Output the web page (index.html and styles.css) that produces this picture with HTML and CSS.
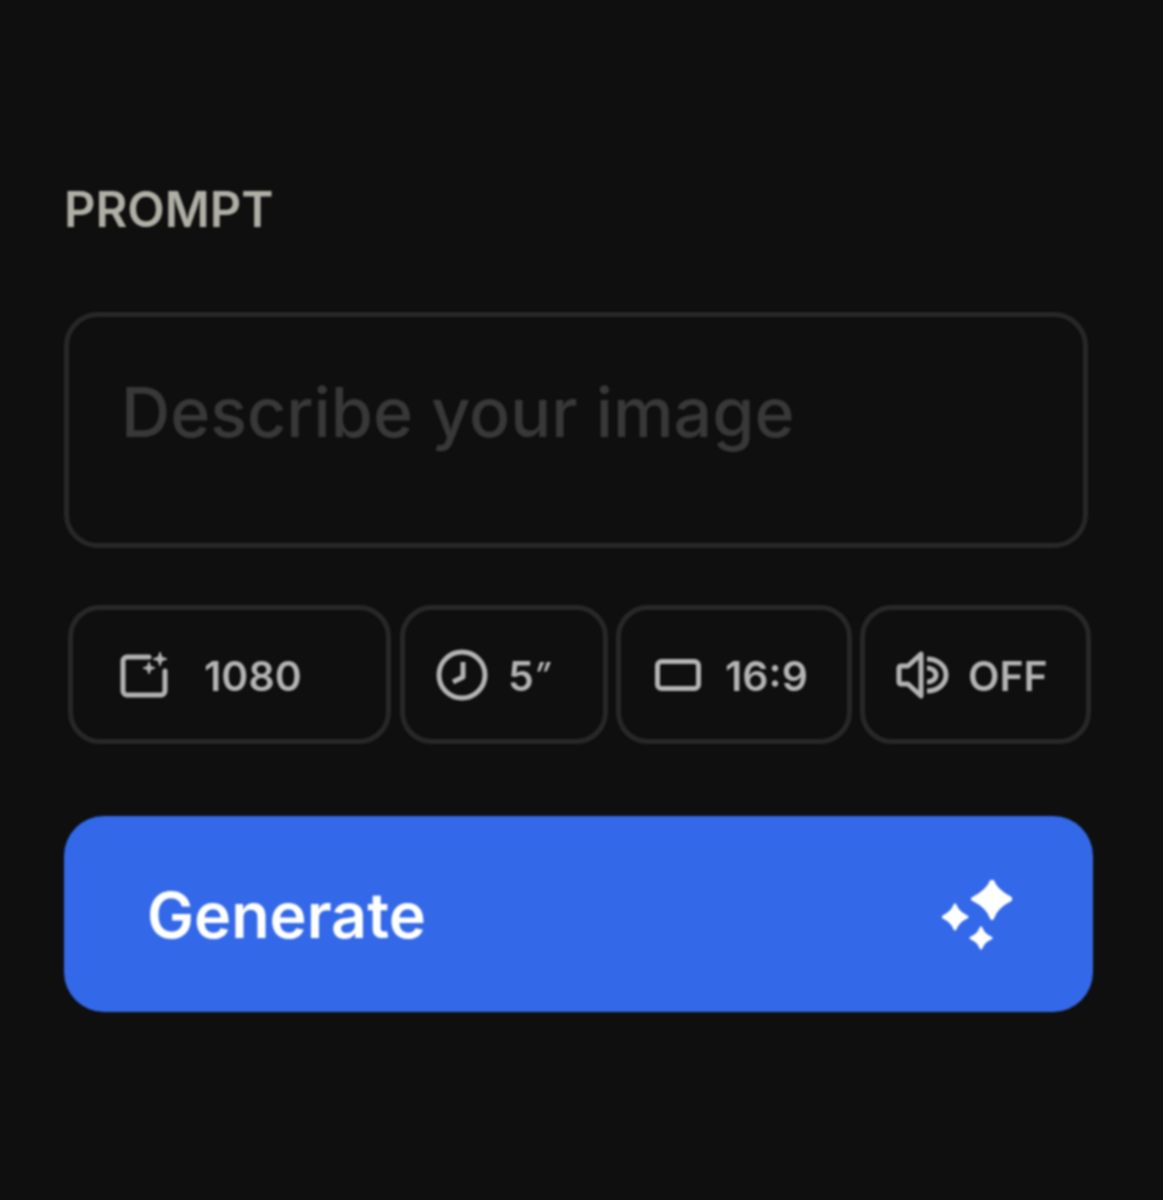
FILE: index.html
```html
<!DOCTYPE html>
<html lang="en">

<head>
    <meta charset="UTF-8">
    <meta name="viewport" content="width=device-width, initial-scale=1.0">
    <title>Prompt</title>
    <link rel="stylesheet" href="styles.css">
</head>

<body>
    <div class="panel">
        <div class="label">PROMPT</div>
        <div class="prompt">Describe your image</div>
        <ul class="options">
            <li class="option option-size">
                <svg class="icon-size" viewBox="0 0 48 48">
                    <path d="M29 6H7a4 4 0 0 0-4 4v30a4 4 0 0 0 4 4h34a4 4 0 0 0 4-4V20" fill="none" stroke="currentColor" stroke-width="5" stroke-linecap="round" />
                    <path d="M40 1l1.800 5.200L47 8l-5.200 1.800L40 15l-1.800-5.200L33 8l5.200-1.800z" fill="currentColor" stroke="currentColor" />
                    <path d="M29 11l1.600 4.400L35 17l-4.400 1.600L29 23l-1.600-4.400L23 17l4.400-1.600z" fill="currentColor" stroke="currentColor" />
                </svg>
                <span>1080</span>
            </li>
            <li class="option option-time">
                <svg class="icon-time" viewBox="0 0 52 52">
                    <circle cx="26" cy="26" r="23" fill="none" stroke="currentColor" stroke-width="5" />
                    <path d="M27 13v15l-10 5" fill="none" stroke="currentColor" stroke-width="5" stroke-linejoin="round" />
                </svg>
                <span class="seconds">5<i>”</i></span>
            </li>
            <li class="option option-ratio">
                <svg class="icon-ratio" viewBox="0 0 46 32">
                    <rect x="2.500" y="2.500" width="41" height="27" rx="4" fill="none" stroke="currentColor" stroke-width="5" />
                </svg>
                <span>16:9</span>
            </li>
            <li class="option option-sound">
                <svg class="icon-sound" viewBox="0 0 54 48">
                    <path d="M25 3L12 15H5a2 2 0 0 0-2 2v14a2 2 0 0 0 2 2h7l13 12z" fill="currentColor" fill-opacity="0" stroke="currentColor" stroke-width="5" stroke-linejoin="round" />
                    <path d="M31 8c11 0 19 7 19 16s-8 16-19 16" fill="none" stroke="currentColor" stroke-width="5" />
                    <path d="M31 17c5 0 9 3 9 7s-4 7-9 7" fill="none" stroke="currentColor" stroke-width="5" />
                </svg>
                <span>OFF</span>
            </li>
        </ul>
        <button class="generate">
            <span>Generate</span>
            <svg class="icon-spark" viewBox="0 0 70 70">
                <path d="M50 1c3 8 9 13 19 18c-10 5-16 10-19 19c-3-9-9-14-19-19c10-5 16-10 19-18z" fill="currentColor" stroke="currentColor" stroke-width="4" stroke-linejoin="round" />
                <path d="M13 25c2 6 6 9 12 12c-6 3-10 6-12 12c-2-6-6-9-12-12c6-3 10-6 12-12z" fill="currentColor" stroke="currentColor" stroke-width="3" stroke-linejoin="round" />
                <path d="M39 48c2 5 4 7 10 10c-6 3-8 5-10 10c-2-5-4-7-10-10c6-3 8-5 10-10z" fill="currentColor" stroke="currentColor" stroke-width="3" stroke-linejoin="round" />
            </svg>
        </button>
    </div>
</body>

</html>
```

FILE: styles.css
```css
html,
body,
ul {
    margin: 0;
    padding: 0;
}

html,
body {
    width: 100%;
    height: 100%;
    background: #0f0f0f;
}

body {
    font-family: Inter, "Liberation Sans", sans-serif;
}

/* the reference is an upscaled shot, so everything is a bit soft */
.panel {
    width: 1029px;
    padding: 181px 0 0 64px;
    filter: blur(0.8px);
}

.label {
    padding-top: 1px;
    font-size: 48.800px;
    line-height: 56px;
    font-weight: 600;
    color: #b0afa6;
}

.prompt {
    box-sizing: border-box;
    width: 1024px;
    height: 236px;
    margin-top: 74px;
    padding: 55px 52px 0;
    border: 5px solid #282828;
    border-radius: 34px;
    font-size: 68.200px;
    line-height: 80px;
    font-weight: 500;
    color: #383838;
}

.options {
    list-style: none;
    display: flex;
    gap: 8px;
    margin: 57px -2px 0 4px;
}

.option {
    box-sizing: border-box;
    height: 139px;
    display: flex;
    align-items: center;
    border: 5px solid #282828;
    border-radius: 32px;
    font-size: 41px;
    font-weight: 600;
    color: #b4b4b4;
}

.option span {
    padding-top: 2px;
}

.option-size {
    width: 323px;
    padding-left: 47px;
    gap: 36px;
}

.option-time {
    width: 208px;
    margin-left: 1px;
    padding-left: 31px;
    gap: 20px;
}

.option-ratio {
    width: 236px;
    padding-left: 34px;
    gap: 24px;
}

.option-sound {
    width: 231px;
    padding-left: 31px;
    gap: 18px;
}

.seconds i {
    font-size: 32px;
    vertical-align: 5px;
}

.icon-size {
    width: 48px;
    height: 48px;
}

.icon-time {
    width: 52px;
    height: 52px;
}

.icon-ratio {
    width: 46px;
    height: 32px;
}

.icon-sound {
    width: 54px;
    height: 48px;
}

.generate {
    box-sizing: border-box;
    width: 1029px;
    height: 196px;
    margin-top: 72px;
    padding: 2px 81px 0 83px;
    display: flex;
    align-items: center;
    justify-content: space-between;
    border: 0;
    border-radius: 40px;
    background: #3369e8;
    color: #fff;
    font-family: inherit;
    font-size: 62.800px;
    font-weight: 600;
}

.icon-spark {
    width: 70px;
    height: 70px;
}
```
